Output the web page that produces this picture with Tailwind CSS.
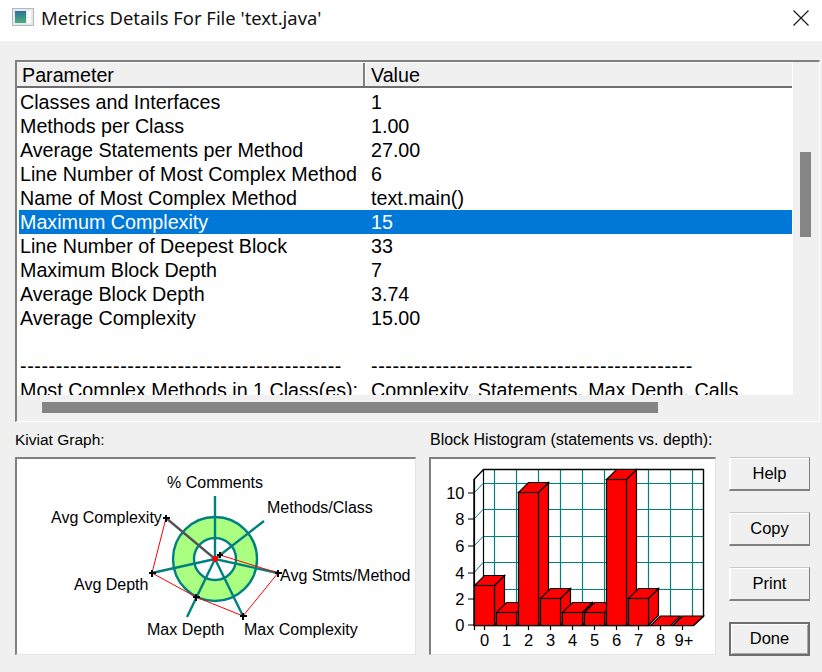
<!DOCTYPE html>
<html><head><meta charset="utf-8"><script src="https://cdn.jsdelivr.net/npm/@tailwindcss/browser@4"></script></head>
<body class="m-0 overflow-hidden">
<div class="w-[822px] h-[672px] bg-[#f0f0f0] flex flex-col font-['Liberation_Sans',Arial,sans-serif] text-[19.7px] text-black">
  <div class="h-[41px] bg-white flex items-center shrink-0 pl-[12px] pb-[6px]">
    <svg width="22" height="18" viewBox="0 0 22 18" class="mr-[7px] mt-[-1px]"><defs><linearGradient id="g" x1="0" y1="0" x2="0" y2="1"><stop offset="0" stop-color="#2c6f9e"/><stop offset="1" stop-color="#4fae7c"/></linearGradient></defs><rect x="0.5" y="0.5" width="21" height="17" fill="#e6e9ee" stroke="#b4b8bc"/><rect x="3" y="3" width="11" height="12" fill="url(#g)"/><rect x="15" y="3" width="4" height="6" fill="#fff"/><rect x="15" y="10" width="4" height="5" fill="#fff"/></svg>
    <span class="font-['Noto_Sans',sans-serif] text-[18.4px] text-[#111]">Metrics Details For File 'text.java'</span>
    <svg width="16" height="16" viewBox="0 0 16 16" class="ml-auto mr-[13px]"><path d="M0.5 0.5L15.5 15.5M15.5 0.5L0.5 15.5" stroke="#1a1a1a" stroke-width="1.2" fill="none"/></svg>
  </div>
  <div class="pt-[19px] pl-[15px] pr-[2px]">
    <div class="w-[805px] h-[362px] border-t-2 border-l-2 border-t-[#808080] border-l-[#808080] border-r border-b border-r-[#fff] border-b-[#fff] flex flex-col">
      <div class="flex flex-1 min-h-0">
        <div class="w-[776px] flex flex-col border-r border-white box-content">
          <div class="h-[26px] flex shrink-0 border-t border-t-white border-b-2 border-b-[#6e6e6e] leading-[25px]">
            <div class="w-[348px] pl-[5px] border-r-2 border-[#808080]">Parameter</div>
            <div class="pl-[5px] border-l border-white">Value</div>
          </div>
          <div class="flex-1 bg-white pt-[2px] overflow-hidden leading-[24px] pl-[3px]">
            <div class="grid grid-cols-[351px_1fr] h-[24px] whitespace-nowrap"><span>Classes and Interfaces</span><span>1</span></div>
            <div class="grid grid-cols-[351px_1fr] h-[24px] whitespace-nowrap"><span>Methods per Class</span><span>1.00</span></div>
            <div class="grid grid-cols-[351px_1fr] h-[24px] whitespace-nowrap"><span>Average Statements per Method</span><span>27.00</span></div>
            <div class="grid grid-cols-[351px_1fr] h-[24px] whitespace-nowrap"><span>Line Number of Most Complex Method</span><span>6</span></div>
            <div class="grid grid-cols-[351px_1fr] h-[24px] whitespace-nowrap"><span>Name of Most Complex Method</span><span>text.main()</span></div>
            <div class="grid grid-cols-[351px_1fr] h-[24px] whitespace-nowrap bg-[#0078d7] text-white ml-[-1px] pl-[1px]"><span>Maximum Complexity</span><span>15</span></div>
            <div class="grid grid-cols-[351px_1fr] h-[24px] whitespace-nowrap"><span>Line Number of Deepest Block</span><span>33</span></div>
            <div class="grid grid-cols-[351px_1fr] h-[24px] whitespace-nowrap"><span>Maximum Block Depth</span><span>7</span></div>
            <div class="grid grid-cols-[351px_1fr] h-[24px] whitespace-nowrap"><span>Average Block Depth</span><span>3.74</span></div>
            <div class="grid grid-cols-[351px_1fr] h-[24px] whitespace-nowrap"><span>Average Complexity</span><span>15.00</span></div>
            <div class="h-[24px]"></div>
            <div class="grid grid-cols-[351px_1fr] h-[24px] whitespace-nowrap tracking-[0.6px]"><span>---------------------------------------------</span><span>---------------------------------------------</span></div>
            <div class="grid grid-cols-[351px_1fr] h-[24px] whitespace-nowrap"><span>Most Complex Methods in 1 Class(es):</span><span>Complexity, Statements, Max Depth, Calls</span></div>
          </div>
        </div>
        <div class="w-[26px] relative"><div class="absolute left-[7px] top-[90px] w-[11px] h-[85px] bg-[#858585]"></div></div>
      </div>
      <div class="h-[26px] shrink-0 relative"><div class="absolute left-[25px] top-[7px] w-[616px] h-[11px] bg-[#858585]"></div></div>
    </div>
  </div>
  <div class="flex pl-[15px] pt-[8px]">
    <div class="w-[414px]">
      <div class="h-[27px] text-[15.5px] leading-[20px]">Kiviat Graph:</div>
      <div class="w-[401px] h-[198px] bg-white border-t-2 border-l-2 border-t-[#808080] border-l-[#808080] border-r border-b border-r-[#e4e4e4] border-b-[#e4e4e4] overflow-hidden">
        <svg width="398" height="196" viewBox="17 459 398 196" class="block" font-size="16" font-family="Liberation Sans">
          <circle cx="215" cy="559" r="32" fill="none" stroke="#aaff80" stroke-width="21"/>
          <circle cx="215" cy="559" r="42" fill="none" stroke="#008080" stroke-width="2.4"/>
          <circle cx="215" cy="559" r="21" fill="none" stroke="#008080" stroke-width="2.4"/>
          <path d="M215 559L215 496M215 559L264 521M215 559L278 573M215 559L243 616M215 559L187 617M215 559L152 573M215 559L166 518" stroke="#008080" stroke-width="2.4" fill="none"/>
          <path d="M215 559L220 555L278 573L243 616L196 597L152 573L166 518Z" fill="none" stroke="#f00" stroke-width="1"/>
          <path d="M212 559h6M215 556v6" stroke="#f00" stroke-width="3"/>
          <path d="M217 555h6M220 552v6M163 518h7M166 515v7M275 573h7M278 570v7M240 616h7M243 613v7M193 597h7M196 594v7M149 573h7M152 570v7" stroke="#000" stroke-width="2"/>
          <text x="167" y="487.5">% Comments</text>
          <text x="267" y="513">Methods/Class</text>
          <text x="51" y="523">Avg Complexity</text>
          <text x="280" y="581">Avg Stmts/Method</text>
          <text x="74" y="590">Avg Depth</text>
          <text x="147" y="635">Max Depth</text>
          <text x="244" y="635">Max Complexity</text>
        </svg>
      </div>
    </div>
    <div class="w-[300px]">
      <div class="h-[27px] text-[15.95px] leading-[20px] ml-[1px] whitespace-nowrap">Block Histogram (statements vs. depth):</div>
      <div class="w-[287px] h-[198px] bg-white border-t-2 border-l-2 border-t-[#808080] border-l-[#808080] border-r border-b border-r-[#e4e4e4] border-b-[#e4e4e4] overflow-hidden">
        <svg width="284" height="196" viewBox="431 459 284 196" class="block" font-family="Liberation Sans" font-size="16.5">
          <rect x="483.5" y="469.5" width="220" height="147" fill="#fff"/>
          <path d="M494.5 469V616M516.5 469V616M538.5 469V616M560.5 469V616M582.5 469V616M604.5 469V616M626.5 469V616M648.5 469V616M670.5 469V616M692.5 469V616M483 483.5H703M483 509.5H703M483 536.5H703M483 562.5H703M483 589.5H703" stroke="#008080" stroke-width="1.2" fill="none"/>
          <path d="M474 493L483 483.5M474 519L483 509.5M474 546L483 536.5M474 573L483 562.5M474 599L483 589.5" stroke="#008080" stroke-width="1" fill="none"/>
          <path d="M474 479.5L483.5 469.5H703.5V616.5L693.5 625.5H474Z" fill="none" stroke="#000" stroke-width="1.4"/>
          <path d="M483.5 469.5V616" stroke="#000" stroke-width="1.2"/>
          <path d="M468 493H474M468 519H474M468 546H474M468 573H474M468 599H474M468 625H474M474.5 479V630M484.5 625V630M506.5 625V630M528.5 625V630M550.5 625V630M572.5 625V630M594.5 625V630M616.5 625V630M638.5 625V630M660.5 625V630M682.5 625V630" stroke="#000" stroke-width="1.2"/>
          <g fill="#f00" stroke="#000" stroke-width="1.2" stroke-linejoin="miter">
            <path d="M494.5 585.5L504.5 575.5V615.5L494.5 625Z"/><path d="M474.5 585.5L484.5 575.5H504.5L494.5 585.5Z"/><rect x="474.5" y="585.5" width="20" height="40"/>
            <path d="M516.5 612.5L526.5 602.5V615.5L516.5 625Z"/><path d="M496.5 612.5L506.5 602.5H526.5L516.5 612.5Z"/><rect x="496.5" y="612.5" width="20" height="13"/>
            <path d="M538.5 492.5L548.5 482.5V615.5L538.5 625Z"/><path d="M518.5 492.5L528.5 482.5H548.5L538.5 492.5Z"/><rect x="518.5" y="492.5" width="20" height="133"/>
            <path d="M560.5 598.5L570.5 588.5V615.5L560.5 625Z"/><path d="M540.5 598.5L550.5 588.5H570.5L560.5 598.5Z"/><rect x="540.5" y="598.5" width="20" height="27"/>
            <path d="M582.5 612.5L592.5 602.5V615.5L582.5 625Z"/><path d="M562.5 612.5L572.5 602.5H592.5L582.5 612.5Z"/><rect x="562.5" y="612.5" width="20" height="13"/>
            <path d="M604.5 612.5L614.5 602.5V615.5L604.5 625Z"/><path d="M584.5 612.5L594.5 602.5H614.5L604.5 612.5Z"/><rect x="584.5" y="612.5" width="20" height="13"/>
            <path d="M626.5 479.5L636.5 469.5V615.5L626.5 625Z"/><path d="M606.5 479.5L616.5 469.5H636.5L626.5 479.5Z"/><rect x="606.5" y="479.5" width="20" height="146"/>
            <path d="M648.5 598.5L658.5 588.5V615.5L648.5 625Z"/><path d="M628.5 598.5L638.5 588.5H658.5L648.5 598.5Z"/><rect x="628.5" y="598.5" width="20" height="27"/>
            <path d="M650.5 625.5L660.5 616H680.5L670.5 625.5Z"/>
            <path d="M672.5 625.5L682.5 616H703.5L693.5 625.5Z"/>
          </g>
          <g text-anchor="end"><text x="464.5" y="499">10</text><text x="464.5" y="525">8</text><text x="464.5" y="552">6</text><text x="464.5" y="579">4</text><text x="464.5" y="605">2</text><text x="464.5" y="631">0</text></g>
          <g text-anchor="middle"><text x="484.5" y="646">0</text><text x="506.5" y="646">1</text><text x="528.5" y="646">2</text><text x="550.5" y="646">3</text><text x="572.5" y="646">4</text><text x="594.5" y="646">5</text><text x="616.5" y="646">6</text><text x="638.5" y="646">7</text><text x="660.5" y="646">8</text><text x="684" y="646">9+</text></g>
        </svg>
      </div>
    </div>
    <div class="flex flex-col gap-[21px] pt-[27px]">
      <button class="w-[81px] h-[34px] bg-[#f0f0f0] border border-t-[#c8c8c8] border-l-white border-r-[#808080] border-b-2 border-b-[#808080] shadow-[inset_1px_1px_0_#fff] text-[16.5px] leading-none">Help</button>
      <button class="w-[81px] h-[34px] bg-[#f0f0f0] border border-t-[#c8c8c8] border-l-white border-r-[#808080] border-b-2 border-b-[#808080] shadow-[inset_1px_1px_0_#fff] text-[16.5px] leading-none">Copy</button>
      <button class="w-[81px] h-[34px] bg-[#f0f0f0] border border-t-[#c8c8c8] border-l-white border-r-[#808080] border-b-2 border-b-[#808080] shadow-[inset_1px_1px_0_#fff] text-[16.5px] leading-none">Print</button>
      <button class="w-[81px] h-[34px] bg-[#f0f0f0] border-2 border-[#6e6e6e] pb-[2px] shadow-[inset_1px_1px_0_#fff,inset_-1px_-1px_0_#a8a8a8] text-[16.5px] leading-none">Done</button>
    </div>
  </div>
</div>
</body></html>
